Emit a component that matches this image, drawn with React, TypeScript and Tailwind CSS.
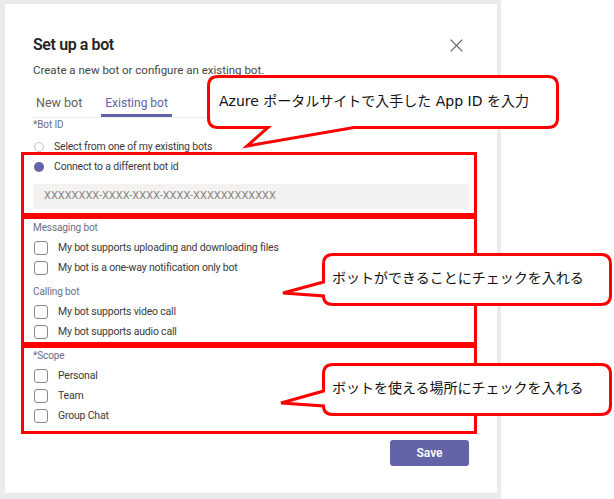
const labelCls = "h-[14px] text-[10px] leading-[14px] tracking-[-0.1px] text-[#6b6d89]";
const optionCls = "text-[10.5px] leading-[14px] tracking-[-0.2px] text-[#3b3a39]";

const Radio = ({ checked, label }: { checked?: boolean; label: string }) => (
  <div className="flex h-[14px] items-center gap-[10px] pl-[1px]">
    {checked ? (
      <span className="h-[10px] w-[10px] shrink-0 rounded-full bg-[#6264a7]" />
    ) : (
      <span className="h-[10px] w-[10px] shrink-0 rounded-full border border-[#c8c6c4] bg-white" />
    )}
    <span className={optionCls}>{label}</span>
  </div>
);

const Check = ({ label }: { label: string }) => (
  <div className="flex h-[20px] items-center gap-[10px] pl-[1px]">
    <span className="h-[14px] w-[14px] shrink-0 rounded-[3px] border border-[#8a8886] bg-white" />
    <span className={optionCls}>{label}</span>
  </div>
);

const callouts = [
  {
    d: "M218 76.5H548Q557.5 76.5 557.5 86V118Q557.5 127.5 548 127.5H354L247 146L268 127.5H218Q208.5 127.5 208.5 118V86Q208.5 76.5 218 76.5Z",
    text: "Azure ポータルサイトで入手した App ID を入力",
    pos: "left-[219px] top-[91px]",
  },
  {
    d: "M333 254.5H601Q610.5 254.5 610.5 264V295Q610.5 304.5 601 304.5H333Q323.5 304.5 323.5 296L283 293L323.5 282V264Q323.5 254.5 333 254.5Z",
    text: "ボットができることにチェックを入れる",
    pos: "left-[332px] top-[268px]",
  },
  {
    d: "M333 364.5H601Q610.5 364.5 610.5 374V405Q610.5 414.5 601 414.5H333Q323.5 414.5 323.5 406L281 403L323.5 391V374Q323.5 364.5 333 364.5Z",
    text: "ボットを使える場所にチェックを入れる",
    pos: "left-[332px] top-[378px]",
  },
];

export default function App() {
  return (
    <div className="relative h-[499px] w-[614px] overflow-hidden bg-white font-['Roboto','Noto_Sans',sans-serif]">
      <div className="h-full w-[501px] bg-[#ebebeb] pl-[5px] pr-[4px] pt-[4px]">
        <div className="h-[489px] bg-white px-[28px] pt-[29px]">
          <div className="flex h-[24px] items-center justify-between">
            <h1 className="text-[16px] font-semibold leading-[24px] tracking-[-0.4px] text-[#252423]">Set up a bot</h1>
            <svg className="mr-[6px]" width="13" height="13" viewBox="0 0 13 13">
              <path d="M0.6 0.6L12.4 12.4M12.4 0.6L0.6 12.4" stroke="#5f5e5d" strokeWidth="1.2" />
            </svg>
          </div>
          <p className="mt-[5px] text-[11.5px] leading-[16px] text-[#484644]">
            Create a new bot or configure an existing bot.
          </p>

          <div className="-ml-[1px] mt-[15px] flex gap-[15px] border-b border-[#edebe9]">
            <div className="border-b-[3px] border-transparent px-[4px] pb-[1px] text-[12.5px] leading-[20px] text-[#616161]">
              New bot
            </div>
            <div className="border-b-[3px] border-[#6264a7] px-[4px] pb-[1px] text-[12px] leading-[20px] text-[#6264a7]">
              Existing bot
            </div>
          </div>

          <div className={labelCls}>*Bot ID</div>
          <div className="mt-[8px]">
            <Radio label="Select from one of my existing bots" />
          </div>

          <div className="-ml-[12px] -mr-[8px] -mt-[2px] border-[3px] border-[#ff0000] pb-[4px] pl-[9px] pr-[5px] pt-[5px]">
            <Radio checked label="Connect to a different bot id" />
            <div className="mt-[10px] flex h-[25px] items-center rounded-[3px] bg-[#f3f2f1] px-[11px] text-[11px] text-[#8a8886]">
              XXXXXXXX-XXXX-XXXX-XXXX-XXXXXXXXXXXX
            </div>
          </div>

          <div className="-ml-[12px] -mr-[8px] border-[3px] border-[#ff0000] pl-[9px] pr-[5px] pt-[2px]">
            <div className={labelCls}>Messaging bot</div>
            <div className="mt-[3px]">
              <Check label="My bot supports uploading and downloading files" />
              <Check label="My bot is a one-way notification only bot" />
            </div>
            <div className={`mt-[7px] ${labelCls}`}>Calling bot</div>
            <div className="mt-[3px]">
              <Check label="My bot supports video call" />
              <Check label="My bot supports audio call" />
            </div>
          </div>

          <div className="-ml-[12px] -mr-[8px] border-[3px] border-[#ff0000] pb-[5px] pl-[9px] pr-[5px] pt-[1px]">
            <div className={labelCls}>*Scope</div>
            <div className="mt-[3px]">
              <Check label="Personal" />
              <Check label="Team" />
              <Check label="Group Chat" />
            </div>
          </div>

          <div className="mt-[6px] flex justify-end">
            <button className="h-[26px] w-[79px] rounded-[3px] bg-[#6264a7] text-[12px] font-semibold text-white">
              Save
            </button>
          </div>
        </div>
      </div>

      <svg className="pointer-events-none absolute inset-0" width="614" height="499" viewBox="0 0 614 499">
        {callouts.map((c) => (
          <path key={c.text} d={c.d} fill="#ffffff" stroke="#ff0000" strokeWidth="3" strokeLinejoin="miter" />
        ))}
      </svg>
      {callouts.map((c) => (
        <div
          key={c.text}
          className={`absolute whitespace-nowrap text-[14px] leading-[20px] text-[#111111] font-['DejaVu_Sans','Noto_Sans_CJK_JP',sans-serif] ${c.pos}`}
        >
          {c.text}
        </div>
      ))}
    </div>
  );
}
